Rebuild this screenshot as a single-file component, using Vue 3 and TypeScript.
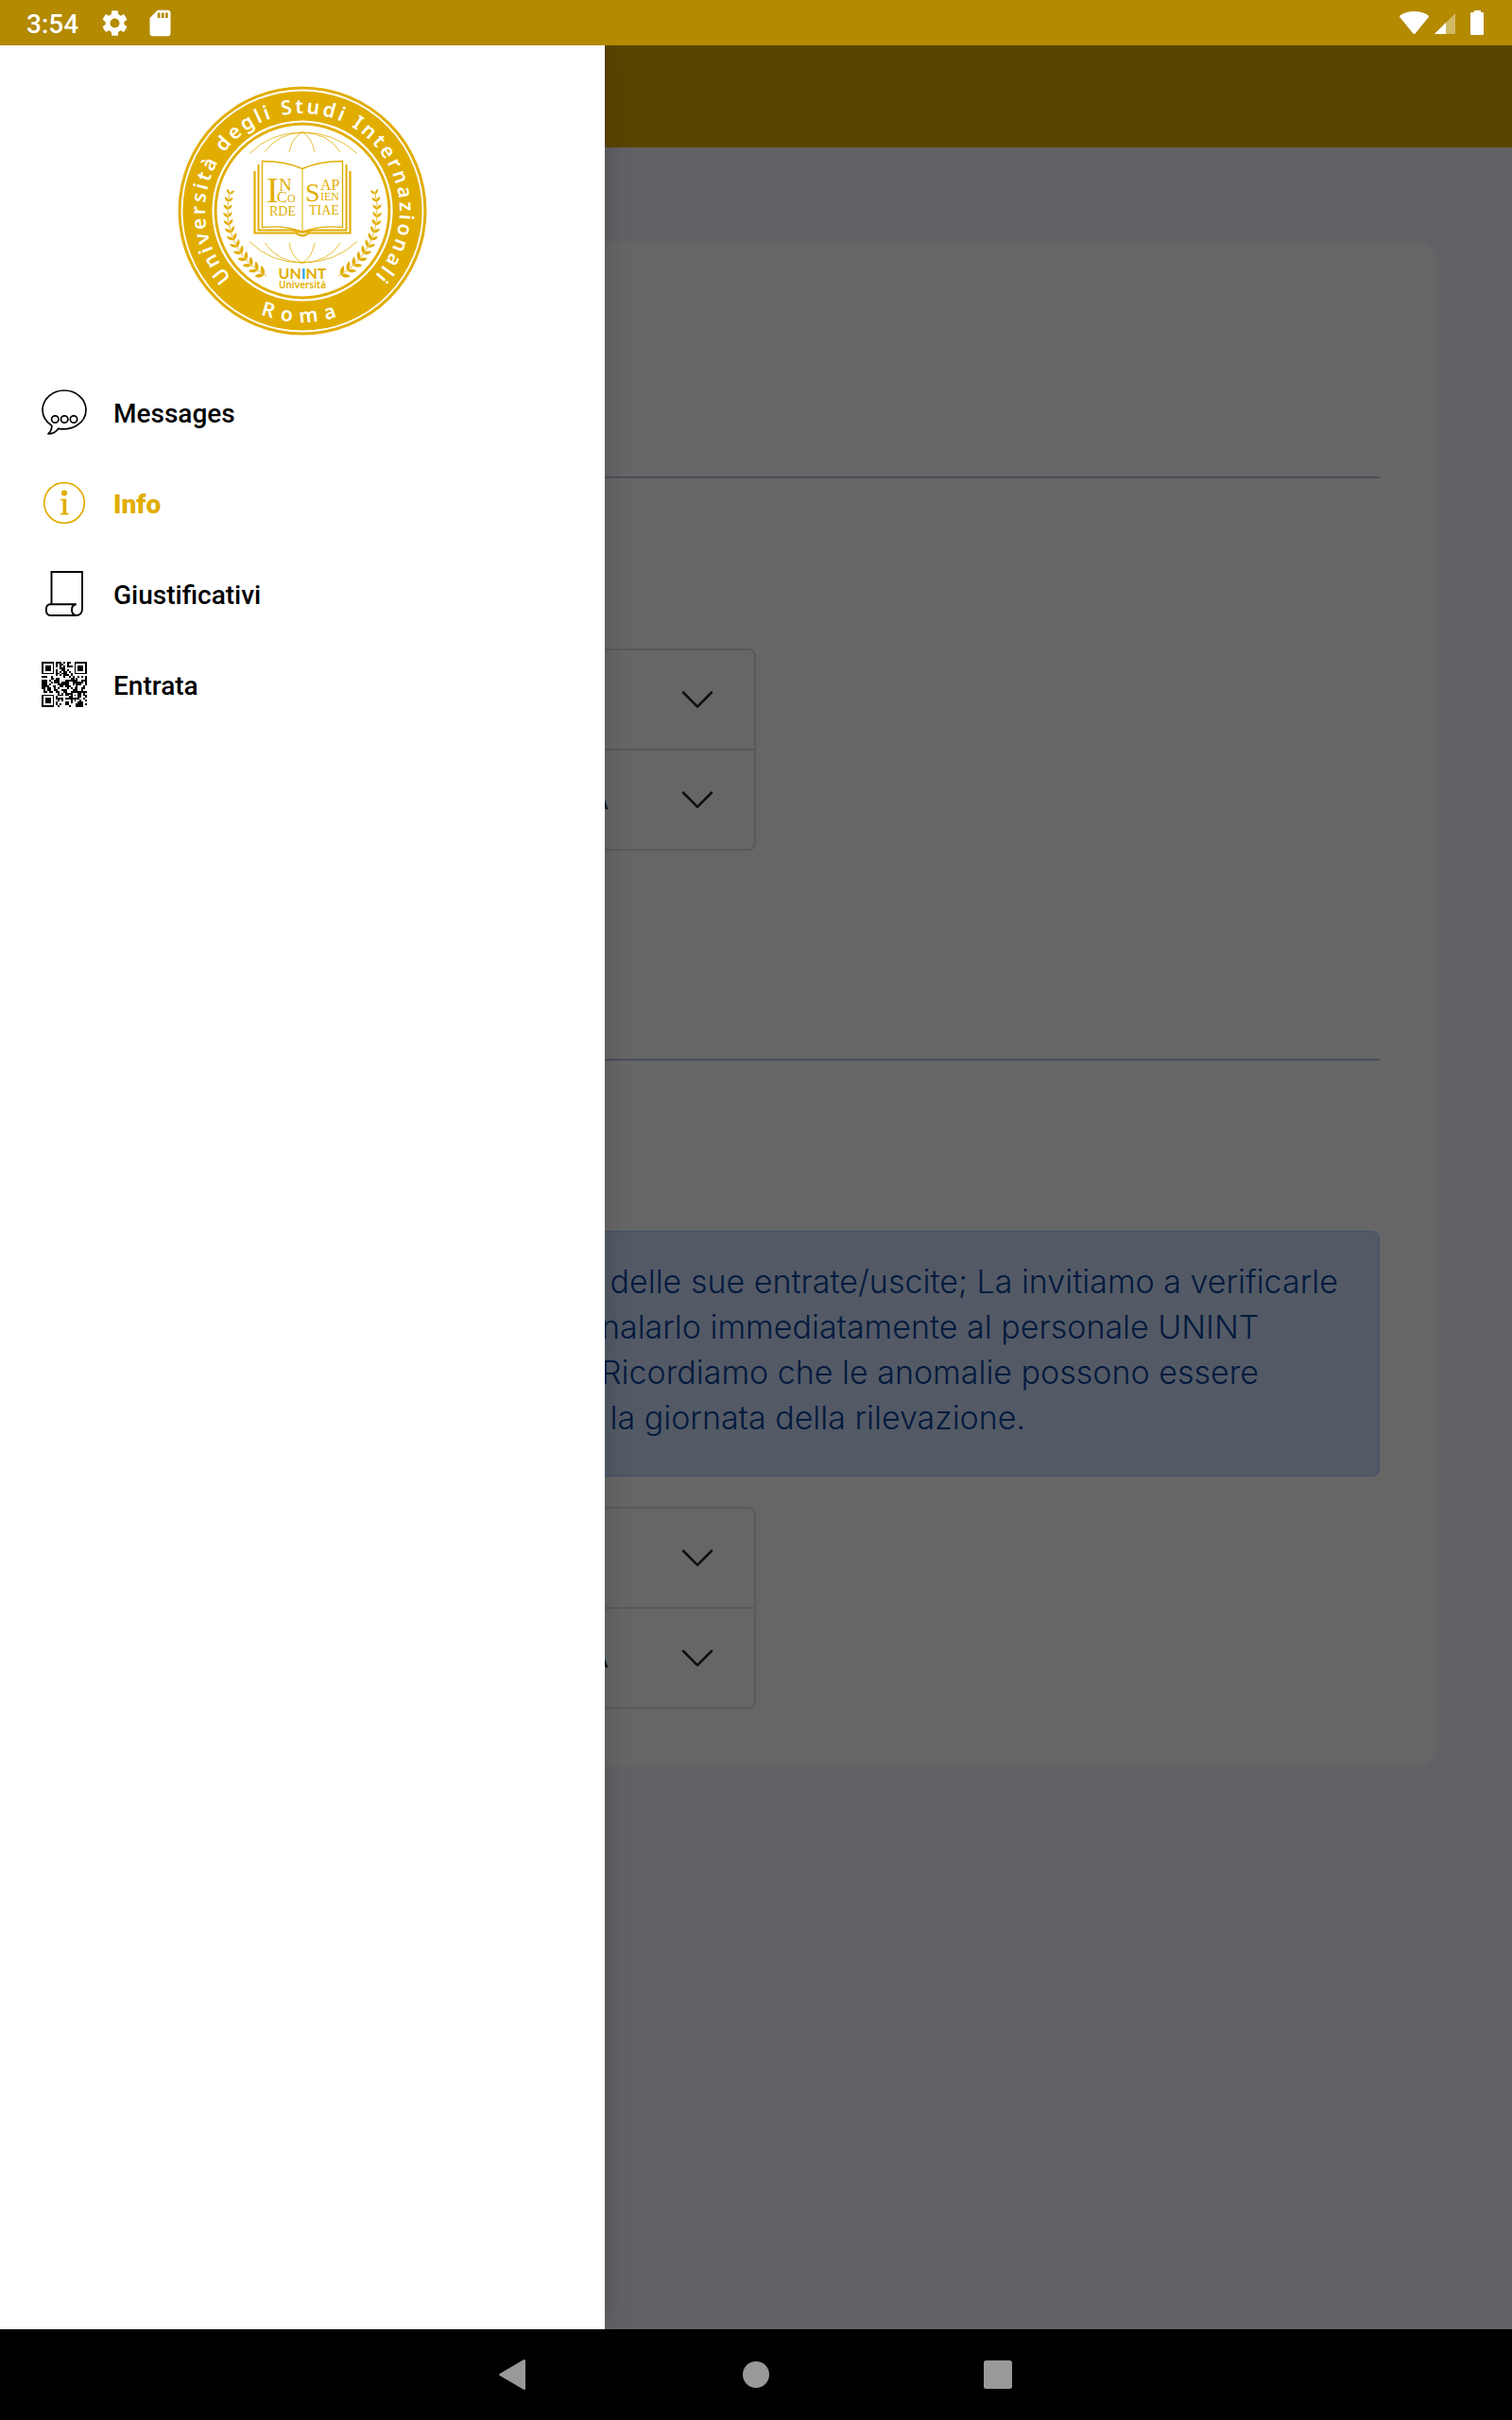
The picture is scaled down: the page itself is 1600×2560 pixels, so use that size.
<script setup lang="ts">
interface MenuItem {
  id: string
  label: string
  active?: boolean
}

const menu: MenuItem[] = [
  { id: 'messages', label: 'Messages' },
  { id: 'info', label: 'Info', active: true },
  { id: 'giustificativi', label: 'Giustificativi' },
  { id: 'entrata', label: 'Entrata' },
]

const noticeLines: string[] = [
  ' delle sue entrate/uscite; La invitiamo a verificarle',
  'nalarlo immediatamente al personale UNINT',
  'Ricordiamo che le anomalie possono essere',
  ' la giornata della rilevazione.',
]

// QR symbol: 25 x 25 modules with three finders and one alignment mark
const QR = 25

function ring(x: number, y: number, cx: number, cy: number): number {
  return Math.max(Math.abs(x - cx), Math.abs(y - cy))
}

function qrPath(): string {
  let seed = 20231
  let d = ''
  for (let y = 0; y < QR; y++) {
    for (let x = 0; x < QR; x++) {
      seed = (seed * 1103515245 + 12345) % 2147483648
      let dark = seed / 2147483648 < 0.5
      for (const [cx, cy] of [[3, 3], [QR - 4, 3], [3, QR - 4]]) {
        const r = ring(x, y, cx, cy)
        if (r <= 4) dark = r !== 2 && r !== 4
      }
      const a = ring(x, y, 18, 18)
      if (a <= 2) dark = a !== 1
      if (dark) d += `M${x} ${y}h1v1h-1z`
    }
  }
  return d
}

const qr = qrPath()

// laurel branch: pairs of leaves that grow from the tip down to the stem
interface Leaf {
  transform: string
}

function laurel(): Leaf[] {
  const leaves: Leaf[] = []
  for (let i = 0; i < 13; i++) {
    const deg = 193 - i * 6
    const a = (deg * Math.PI) / 180
    const x = 132 + 79 * Math.cos(a)
    const y = 132 + 79 * Math.sin(a)
    const size = 0.6 + i * 0.03
    for (const side of [-42, 42]) {
      leaves.push({
        transform: `translate(${x.toFixed(1)} ${y.toFixed(1)}) rotate(${deg - 180 + side}) scale(${size.toFixed(2)})`,
      })
    }
  }
  return leaves
}

const leaves = laurel()
</script>

<template>
  <div class="screen">
    <header class="status">
      <span class="clock">3:54</span>
      <svg class="status-icon" viewBox="0 0 24 24" aria-hidden="true">
        <path d="M19.14 12.94c.04-.3.06-.61.06-.94 0-.32-.02-.64-.07-.94l2.03-1.58a.49.49 0 0 0 .12-.61l-1.92-3.32a.488.488 0 0 0-.59-.22l-2.39.96c-.5-.38-1.03-.7-1.62-.94l-.36-2.54a.484.484 0 0 0-.48-.41h-3.84c-.24 0-.43.17-.47.41l-.36 2.54c-.59.24-1.13.57-1.62.94l-2.39-.96c-.22-.08-.47 0-.59.22L2.74 8.87c-.12.21-.08.47.12.61l2.03 1.58c-.05.3-.09.63-.09.94s.02.64.07.94l-2.03 1.58a.49.49 0 0 0-.12.61l1.92 3.32c.12.22.37.29.59.22l2.39-.96c.5.38 1.03.7 1.62.94l.36 2.54c.05.24.24.41.48.41h3.84c.24 0 .44-.17.47-.41l.36-2.54c.59-.24 1.13-.56 1.62-.94l2.39.96c.22.08.47 0 .59-.22l1.92-3.32c.12-.22.07-.47-.12-.61l-2.01-1.58zM12 15.6c-1.98 0-3.6-1.62-3.6-3.6s1.62-3.6 3.6-3.6 3.6 1.62 3.6 3.6-1.62 3.6-3.6 3.6z" />
      </svg>
      <svg class="status-icon" viewBox="0 0 24 24" aria-hidden="true">
        <path d="M18 2h-8L4 8v12c0 1.100.9 2 2 2h12c1.100 0 2-.9 2-2V4c0-1.100-.9-2-2-2zm-6 6h-2V4h2v4zm3 0h-2V4h2v4zm3 0h-2V4h2v4z" />
      </svg>
      <svg class="signals" viewBox="0 0 92 48" aria-hidden="true">
        <path d="M2 19Q0 17.500 2 16Q8 12 16.500 12T31 16Q33 17.500 31 19L18 35Q16.500 37 15 35z" />
        <path d="M60 14V36H38z" opacity=".4" />
        <path d="M50 24V36H38z" />
        <path d="M80 11h7v2h2q1 0 1 1v22q0 1-1 1h-12q-1 0-1-1v-22q0-1 1-1h3z" />
      </svg>
    </header>

    <div class="stage">
      <div class="page">
        <div class="toolbar"></div>
        <main class="content">
          <section class="card">
            <hr class="rule first" />
            <div class="accordion">
              <button type="button" class="row" aria-label="Espandi">
                <svg class="chevron" viewBox="0 0 16 16"><path d="M1.646 4.646a.5.5 0 0 1 .708 0L8 10.293l5.646-5.647a.5.5 0 0 1 .708.708l-6 6a.5.5 0 0 1-.708 0l-6-6a.5.5 0 0 1 0-.708z" /></svg>
              </button>
              <button type="button" class="row">
                <span>A</span>
                <svg class="chevron" viewBox="0 0 16 16"><path d="M1.646 4.646a.5.5 0 0 1 .708 0L8 10.293l5.646-5.647a.5.5 0 0 1 .708.708l-6 6a.5.5 0 0 1-.708 0l-6-6a.5.5 0 0 1 0-.708z" /></svg>
              </button>
            </div>
            <hr class="rule" />
            <p class="notice">
              <span v-for="line in noticeLines" :key="line" class="line">{{ line }}</span>
            </p>
            <div class="accordion">
              <button type="button" class="row" aria-label="Espandi">
                <svg class="chevron" viewBox="0 0 16 16"><path d="M1.646 4.646a.5.5 0 0 1 .708 0L8 10.293l5.646-5.647a.5.5 0 0 1 .708.708l-6 6a.5.5 0 0 1-.708 0l-6-6a.5.5 0 0 1 0-.708z" /></svg>
              </button>
              <button type="button" class="row">
                <span>A</span>
                <svg class="chevron" viewBox="0 0 16 16"><path d="M1.646 4.646a.5.5 0 0 1 .708 0L8 10.293l5.646-5.647a.5.5 0 0 1 .708.708l-6 6a.5.5 0 0 1-.708 0l-6-6a.5.5 0 0 1 0-.708z" /></svg>
              </button>
            </div>
          </section>
        </main>
      </div>

      <div class="scrim"></div>

      <aside class="drawer">
        <svg class="seal" viewBox="0 0 264 264" role="img" aria-label="UNINT">
          <defs>
            <path id="arc-top" d="M132 235a103 103 0 0 1 0-206a103 103 0 0 1 0 206" />
            <path id="arc-bottom" d="M14 132a118 118 0 0 0 236 0" />
            <g id="globe-half" fill="none" stroke="#e1ad00" stroke-width=".8">
              <path d="M76 71.500Q98 49 132 49T190 71.500" />
              <path d="M92 70Q106 50 132 49Q160 50 172 70" />
              <path d="M118 70Q121 54 132 49Q142 54 145 70" />
            </g>
            <g id="branch">
              <path v-for="(leaf, i) in leaves" :key="i" :transform="leaf.transform" d="M0 0C-2.800-3-2.500-7 0-10.500C2.500-7 2.800-3 0 0z" />
              <path d="M55 113A79 79 0 0 0 94 201" fill="none" stroke="#e1ad00" stroke-width=".8" />
            </g>
          </defs>
          <circle cx="132" cy="132" r="131.500" fill="#e1ad00" />
          <circle cx="132" cy="132" r="127.500" fill="none" stroke="#fff" stroke-width="1.800" />
          <circle cx="132" cy="132" r="94.500" fill="none" stroke="#fff" stroke-width="2.200" />
          <circle cx="132" cy="132" r="90.500" fill="#fff" />
          <text class="motto top"><textPath href="#arc-top" startOffset="50%">Università degli Studi Internazionali</textPath></text>
          <text class="motto bottom"><textPath href="#arc-bottom" startOffset="50%">Roma</textPath></text>

          <use href="#globe-half" />
          <use href="#globe-half" transform="matrix(1 0 0 -1 0 236)" />

          <g fill="none" stroke="#e1ad00">
            <path d="M81.500 90V155.500H125Q132 161 139 155.500H182.500V90" stroke-width="2.200" />
            <path d="M85.500 83V152.500H122Q132 157 142 152.500H178.500V83" stroke-width="2" />
            <path d="M89.500 79.500V149.500Q112 147 132 154Q152 147 174.500 149.500V79.500Q150 79.500 132 87.500Q114 79.500 89.500 79.500z" fill="#fff" stroke-width="1.400" />
            <path d="M132 87.500V154" stroke-width="1" />
          </g>
          <g class="book">
            <text x="94" y="123" font-size="38">I</text>
            <text x="107" y="111" font-size="19">N</text>
            <text x="105" y="123" font-size="16">C</text>
            <text x="116" y="123" font-size="12">O</text>
            <text x="97" y="137" font-size="14">RDE</text>
            <text x="135" y="122" font-size="28">S</text>
            <text x="151" y="110" font-size="16">AP</text>
            <text x="151" y="121" font-size="12">IEN</text>
            <text x="139" y="136" font-size="14">TIAE</text>
          </g>

          <g fill="#e1ad00">
            <use href="#branch" />
            <use href="#branch" transform="matrix(-1 0 0 1 264 0)" />
          </g>
          <text class="brand" x="132" y="204">UN<tspan fill="#1ea7f0">I</tspan>NT</text>
          <text class="brand-sub" x="132" y="214">Università</text>
        </svg>

        <nav class="menu">
          <a v-for="item in menu" :key="item.id" :href="'#' + item.id" class="item" :class="{ active: item.active }">
            <svg v-if="item.id === 'messages'" class="icon" viewBox="0 0 48 48" aria-hidden="true">
              <g fill="none" stroke="#000" stroke-width="1.700">
                <path d="M24 1C11.300 1 1 10.400 1 21.500C1 29 5 34.500 10.800 38.300C11 42 9.200 45 7 47C12 47 15.500 45 17.800 41.300C31 44 47 36.500 47 21.500C47 10.400 36.700 1 24 1z" stroke-linejoin="round" />
                <circle cx="14.300" cy="31.500" r="3.700" />
                <circle cx="24.200" cy="31.500" r="3.700" />
                <circle cx="34" cy="31.500" r="3.700" />
              </g>
            </svg>
            <svg v-else-if="item.id === 'info'" class="icon" viewBox="0 0 48 48" aria-hidden="true">
              <circle cx="24" cy="24" r="21.300" fill="none" stroke="#e1ad00" stroke-width="1.700" />
              <circle cx="24" cy="13.500" r="3.100" fill="#e1ad00" />
              <path d="M20.200 19.800H26.200V34.700H28.500V36.500H20V34.700H22.500V21.500H20.200z" fill="#e1ad00" />
            </svg>
            <svg v-else-if="item.id === 'giustificativi'" class="icon" viewBox="0 0 48 48" aria-hidden="true">
              <g fill="none" stroke="#000" stroke-width="1.900">
                <path d="M10.500 35V1H43V40Q43 47 36 47H9.500Q4.800 47 4.800 41T9.500 35.300H36.500" />
                <path d="M36.500 35.300Q32 36 32 41T36.500 47" />
              </g>
            </svg>
            <svg v-else class="icon" viewBox="0 0 25 25" shape-rendering="crispEdges" aria-hidden="true">
              <path :d="qr" />
            </svg>
            <span class="label">{{ item.label }}</span>
          </a>
        </nav>
      </aside>
    </div>

    <footer class="system">
      <button type="button" aria-label="Back">
        <svg viewBox="0 0 48 48"><path d="M8.800 22.900L34 8.300Q36 7.300 36 9.500V38.500Q36 40.700 34 39.700L8.800 25.100Q7.200 24 8.800 22.900z" /></svg>
      </button>
      <button type="button" aria-label="Home">
        <svg viewBox="0 0 48 48"><circle cx="24" cy="24" r="14" /></svg>
      </button>
      <button type="button" aria-label="Recent apps">
        <svg viewBox="0 0 48 48"><rect x="9" y="9" width="30" height="30" rx="2.500" /></svg>
      </button>
    </footer>
  </div>
</template>

<style>
body {
  margin: 0;
}
</style>

<style scoped>
.screen {
  display: flex;
  flex-direction: column;
  min-height: 100vh;
  font-family: Roboto, sans-serif;
}

.status {
  display: flex;
  align-items: center;
  height: 48px;
  padding: 0 28px;
  background: #b38a00;
  color: #fff;
  fill: #fff;
}

.clock {
  margin-right: 22px;
  padding-top: 3px;
  font-size: 28px;
  font-weight: 500;
  line-height: 33px;
}

.status-icon {
  width: 33px;
  height: 33px;
  margin-right: 15px;
}

.signals {
  width: 92px;
  height: 48px;
  margin-left: auto;
}

.stage {
  position: relative;
  display: flex;
  flex: 1;
  overflow: hidden;
}

.page {
  flex: 1;
  background: #f3f5ff;
}

.toolbar {
  height: 108px;
  background: #e1ad00;
}

.content {
  padding: 100px 5%;
}

.card {
  display: flow-root;
  padding: 0 60px 60px;
  border-radius: 20px;
  background: #fff;
}

.rule {
  height: 2px;
  margin: 220px 0 180px;
  border: 0;
  background: #b4c6e2;
}

.rule.first {
  margin-top: 248px;
}

.accordion {
  box-sizing: border-box;
  width: 50%;
  border: 2px solid #dfdfdf;
  border-radius: 8px;
}

.row {
  display: flex;
  align-items: center;
  justify-content: flex-end;
  gap: 74px;
  width: 100%;
  height: 104px;
  padding: 0 40px;
  border: 0;
  background: none;
  color: #212529;
  font: 28px Inter, sans-serif;
}

.row + .row {
  box-sizing: content-box;
  width: auto;
  min-width: calc(100% - 80px);
  border-top: 2px solid #dfdfdf;
}

.chevron {
  width: 40px;
  height: 40px;
  fill: #212529;
}

.notice {
  margin: 0 0 32px;
  padding: 28px 36px 36px 494px;
  border: 2px solid #b6d4fe;
  border-radius: 8px;
  background: #cfe2ff;
  color: #084298;
  font: 300 34px/48px Inter, sans-serif;
}

.line {
  display: block;
  white-space: pre;
}

.scrim {
  position: absolute;
  inset: 0;
  background: rgba(0, 0, 0, 0.6);
}

.drawer {
  position: absolute;
  top: 0;
  bottom: 0;
  left: 0;
  box-sizing: border-box;
  width: 40%;
  padding-top: 43px;
  background: #fff;
  box-shadow: 0 0 28px rgba(0, 0, 0, 0.18);
}

.seal {
  display: block;
  width: 264px;
  height: 264px;
  margin: 0 auto 33px;
}

.motto {
  fill: #fff;
  font: 600 21px "Noto Sans", sans-serif;
  text-anchor: middle;
}

.motto.top {
  letter-spacing: 3px;
}

.motto.bottom {
  letter-spacing: 8px;
}

.book {
  fill: #e1ad00;
  font-family: "Liberation Serif", serif;
}

.brand {
  fill: #e1ad00;
  font: 700 16px Lato, sans-serif;
  text-anchor: middle;
}

.brand-sub {
  fill: #e1ad00;
  font: 600 10px "Noto Sans", sans-serif;
  text-anchor: middle;
}

.menu {
  display: flex;
  flex-direction: column;
}

.item {
  display: flex;
  align-items: center;
  gap: 28px;
  height: 96px;
  padding: 0 44px;
  color: #000;
  font-size: 28px;
  font-weight: 500;
  text-decoration: none;
}

.item.active {
  color: #e1ad00;
  font-weight: 900;
}

.label {
  padding-top: 3px;
}

.icon {
  width: 48px;
  height: 48px;
}

.system {
  display: flex;
  justify-content: center;
  height: 96px;
  background: #000;
}

.system button {
  display: flex;
  align-items: center;
  justify-content: center;
  width: 16%;
  padding: 0;
  border: 0;
  background: none;
}

.system svg {
  width: 48px;
  height: 48px;
  fill: #999;
}
</style>
